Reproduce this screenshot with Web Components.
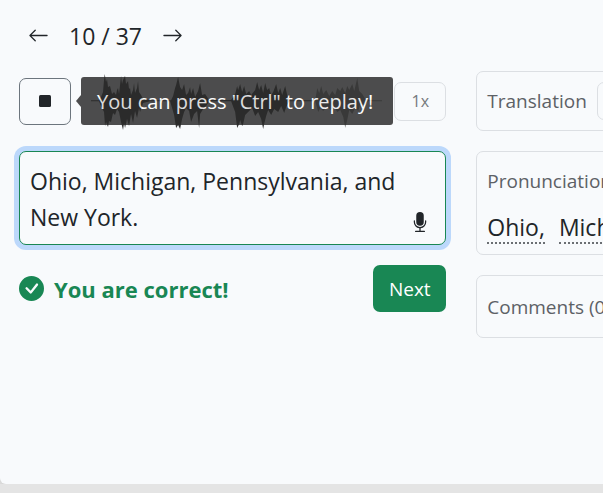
<!DOCTYPE html>
<html lang="en">
<head>
<meta charset="utf-8">
<meta name="viewport" content="width=device-width, initial-scale=1">
<title>Dictation exercise</title>
<style>
html { background: #e4e4e4; }
body {
  margin: 0;
  overflow: hidden;
  font-family: "Open Sans", "Noto Sans", sans-serif;
  font-size: 20px;
  color: #212529;
  --surface: #f8fafc;
  --line: #dcdfe3;
  --muted: #5d6166;
  --success: #198754;
}
</style>
</head>
<body>
<lesson-card>
  <lesson-pager slot="header" current="10" total="37"></lesson-pager>
  <audio-player slot="main" hint='You can press "Ctrl" to replay!' speed="1x"></audio-player>
  <answer-box slot="main" value="Ohio, Michigan, Pennsylvania, and New York."></answer-box>
  <result-bar slot="main">You are correct!</result-bar>
  <side-panel slot="side" label="Translation" toggle="Show"></side-panel>
  <side-panel slot="side" label="Pronunciation">
    <word-link>Ohio,</word-link>
    <word-link>Michigan,</word-link>
  </side-panel>
  <side-panel slot="side" label="Comments (0)" tall></side-panel>
</lesson-card>

<script>
function define(name, html, setup) {
  const template = document.createElement('template');
  template.innerHTML = '<style>*{box-sizing:border-box}button,textarea{font:inherit;color:inherit}</style>' + html;
  customElements.define(name, class extends HTMLElement {
    constructor() {
      super();
      this.attachShadow({ mode: 'open' }).append(template.content.cloneNode(true));
    }
    connectedCallback() {
      if (setup) setup(this, this.shadowRoot);
    }
  });
}

/* The card is wider than a narrow window, so the side column runs off its right edge. */
define('lesson-card', `
<style>
:host {
  display: block;
  box-sizing: border-box;
  width: 153vw;
  min-height: calc(100vh - 9px);
  padding: 0 19px 20px;
  background: var(--surface);
  border-radius: 0 0 6px 6px;
  box-shadow: 0 4px 16px rgba(0,0,0,.12);
}
header { height: 71px; display: flex; align-items: center; }
.columns { display: grid; grid-template-columns: 1fr 1fr; gap: 30px; align-items: start; }
main, aside { display: grid; gap: 20px; min-width: 0; }
</style>
<header><slot name="header"></slot></header>
<div class="columns">
  <main><slot name="main"></slot></main>
  <aside><slot name="side"></slot></aside>
</div>`);

define('lesson-pager', `
<style>
:host { display: flex; align-items: center; gap: 20px; padding-left: 9px; font-size: 23px; line-height: 30px; }
button { display: flex; padding: 0; border: 0; background: none; }
svg { width: 21px; height: 21px; fill: currentColor; }
</style>
<button aria-label="Previous"><svg viewBox="0 0 16 16"><path d="M15 8a.5.5 0 0 0-.5-.5H2.707l3.147-3.146a.5.5 0 1 0-.708-.708l-4 4a.5.5 0 0 0 0 .708l4 4a.5.5 0 0 0 .708-.708L2.707 8.500H14.500A.5.5 0 0 0 15 8"/></svg></button>
<span></span>
<button aria-label="Next sentence"><svg viewBox="0 0 16 16"><path d="M1 8a.5.5 0 0 1 .5-.5h11.793l-3.147-3.146a.5.5 0 0 1 .708-.708l4 4a.5.5 0 0 1 0 .708l-4 4a.5.5 0 0 1-.708-.708L13.293 8.500H1.500A.5.5 0 0 1 1 8"/></svg></button>`,
(el, root) => {
  root.querySelector('span').textContent = el.getAttribute('current') + ' / ' + el.getAttribute('total');
});

define('audio-player', `
<style>
:host { position: relative; display: flex; align-items: center; height: 60px; }
button { padding: 0; background: none; }
.stop { width: 52px; height: 47px; border: 1px solid #6c757d; border-radius: 7px; display: grid; place-items: center; }
.stop svg { width: 12px; height: 12px; }
.wave { flex: 1; min-width: 0; height: 60px; margin: 0 12px 0 20px; }
.speed { width: 52px; height: 39px; border: 1px solid var(--line); border-radius: 7px; font-size: 16px; color: #75797d; }
.hint {
  position: absolute; left: 62px; top: 6px; height: 48px; padding: 0 20px 0 16px;
  display: flex; align-items: center; white-space: nowrap; font-size: 20px;
  background: #2a2a2a; color: #fff; border-radius: 3px; opacity: .83;
}
.hint::before {
  content: ""; position: absolute; left: -5px; top: 18px;
  border: solid transparent; border-width: 6px 5px 6px 0; border-right-color: #2a2a2a;
}
</style>
<button class="stop" aria-label="Stop"><svg viewBox="0 0 12 12"><rect width="12" height="12" rx="1.5" fill="#212529"/></svg></button>
<svg class="wave" viewBox="91 71 291 60" preserveAspectRatio="none" aria-hidden="true">
  <path fill="#323232" d="M91 100.200H99L101 97 103 92 104 80 104.700 74 106 82 107 79 108 87 110 86 112 94 114 92 116 95 117 90 118 88 119 94 120 85 121 76 122 84 123 80 125 76 126 84 128 81 129 89 130 88 131 95 133 90 134 83 135 93 137 88 138 81 139 92 141 95 143 99 150 100.200H171L173 96 175 88 176 85 178 77 180 87 182 90 184 84 186 95 188 93 190 87 191 94 193 88 195 97 198 91 200 83 202 95 205 94 209 100H231L233 97 235 94 237 86 238 90 240 84 242 92 244 86 246 94 249 91 251 95 255 90 257 82 259 90 261 85 263 93 265 83 267 90 269 88 271 95 273 92 276 84 278 93 280 88 282 95 285 86 287 95 289 100.200H315V101.200H289L286 107 284 113 281 106 278 112 274 109 271 115 268 110 266 116 264 124 263 129 261 119 258 112 255 116 252 108 248 112 245 115 243 124 242 126 240 120 239 124 237 128 235 112 231 101.200H209L206 106 203 109 200 114 199 128 197 111 194 114 191 122 189 111 186 108 184 112 182 119 180 129 178 125 176 128 174 115 172 108 170 101.200H150L143 103 140 112 139 108 137 118 135 111 133 123 131 114 129 126 127 119 125 128 124 123 123 130 121 122 119 112 117 109 115 115 113 113 111 122 109 121 108 127 106 122 105 126 104 112 101 106 99 101.200H91Z"/>
  <path fill="#888" d="M315 100.200L317 88 319 93 321 86 323 94 326 90 329 96 332 91 335 95 337 88 340 91 342 87 345 93 347 86 349 90 352 84 354 91 357 78 359 91 362 94 365 99 370 100.200H382V101.200H368L364 105 360 104 358 111 355 108 352 114 349 110 347 120 345 128 343 117 340 110 337 112 334 107 330 110 327 106 323 111 320 108 318 112 315 101.200Z"/>
</svg>
<button class="speed"></button>
<div class="hint" role="tooltip"></div>`,
(el, root) => {
  root.querySelector('.hint').textContent = el.getAttribute('hint');
  root.querySelector('.speed').textContent = el.getAttribute('speed');
});

define('answer-box', `
<style>
:host { position: relative; display: block; }
textarea {
  display: block; width: 100%; height: 94px; margin: 0; padding: 11px 40px 9px 10px;
  border: 1px solid var(--success); border-radius: 7px; outline: 0; resize: none; overflow: hidden;
  background: var(--surface); box-shadow: 0 0 0 5px #bcd8fb;
  font-size: 23px; line-height: 36px;
}
button { position: absolute; right: 16px; bottom: 13px; display: flex; padding: 0; border: 0; background: none; }
svg { width: 20px; height: 20px; fill: #212529; }
</style>
<textarea aria-label="Your answer" spellcheck="false"></textarea>
<button aria-label="Dictate"><svg viewBox="0 0 16 16"><path d="M5 3a3 3 0 0 1 6 0v5a3 3 0 0 1-6 0z"/><path d="M3.500 6.500A.5.5 0 0 1 4 7v1a4 4 0 0 0 8 0V7a.5.5 0 0 1 1 0v1a5 5 0 0 1-4.500 4.975V15h3a.5.5 0 0 1 0 1h-7a.5.5 0 0 1 0-1h3v-2.025A5 5 0 0 1 3 8V7a.5.5 0 0 1 .5-.5"/></svg></button>`,
(el, root) => {
  root.querySelector('textarea').value = el.getAttribute('value');
});

define('result-bar', `
<style>
:host { display: flex; align-items: center; gap: 10px; color: var(--success); font-size: 22px; font-weight: 700; }
svg { width: 25px; height: 25px; }
button {
  margin-left: auto; width: 73px; height: 47px; padding: 0; border: 0; border-radius: 7px;
  background: var(--success); color: #fff; font-size: 19px; font-weight: 400;
}
</style>
<svg viewBox="0 0 16 16" fill="currentColor" aria-hidden="true"><path d="M16 8A8 8 0 1 1 0 8a8 8 0 0 1 16 0m-3.970-3.030a.75.75 0 0 0-1.080.022L7.477 9.417 5.384 7.323a.75.75 0 0 0-1.060 1.060L6.970 11.030a.75.75 0 0 0 1.079-.02l3.992-4.990a.75.75 0 0 0-.01-1.050z"/></svg>
<span><slot></slot></span>
<button>Next</button>`);

define('side-panel', `
<style>
:host { display: block; box-sizing: border-box; padding: 10px; border: 1px solid var(--line); border-radius: 7px; }
.head { display: flex; align-items: center; gap: 10px; height: 38px; color: var(--muted); font-size: 19px; }
:host([tall]) .head { height: 41px; }
.head button { height: 38px; padding: 0 14px; border: 1px solid var(--line); border-radius: 7px; background: none; font-size: 16px; }
.words { display: flex; gap: 14px; padding-top: 12px; }
[hidden] { display: none; }
</style>
<div class="head"><span></span><button hidden></button></div>
<div class="words"><slot></slot></div>`,
(el, root) => {
  root.querySelector('span').textContent = el.getAttribute('label');
  const button = root.querySelector('button');
  button.hidden = !el.hasAttribute('toggle');
  button.textContent = el.getAttribute('toggle');
  root.querySelector('.words').hidden = !el.children.length;
});

define('word-link', `
<style>
:host { display: block; }
a { display: block; color: #212529; text-decoration: none; font-size: 23px; line-height: 30px; border-bottom: 2px dotted #6b6f73; }
</style>
<a href="#"><slot></slot></a>`);
</script>
</body>
</html>
